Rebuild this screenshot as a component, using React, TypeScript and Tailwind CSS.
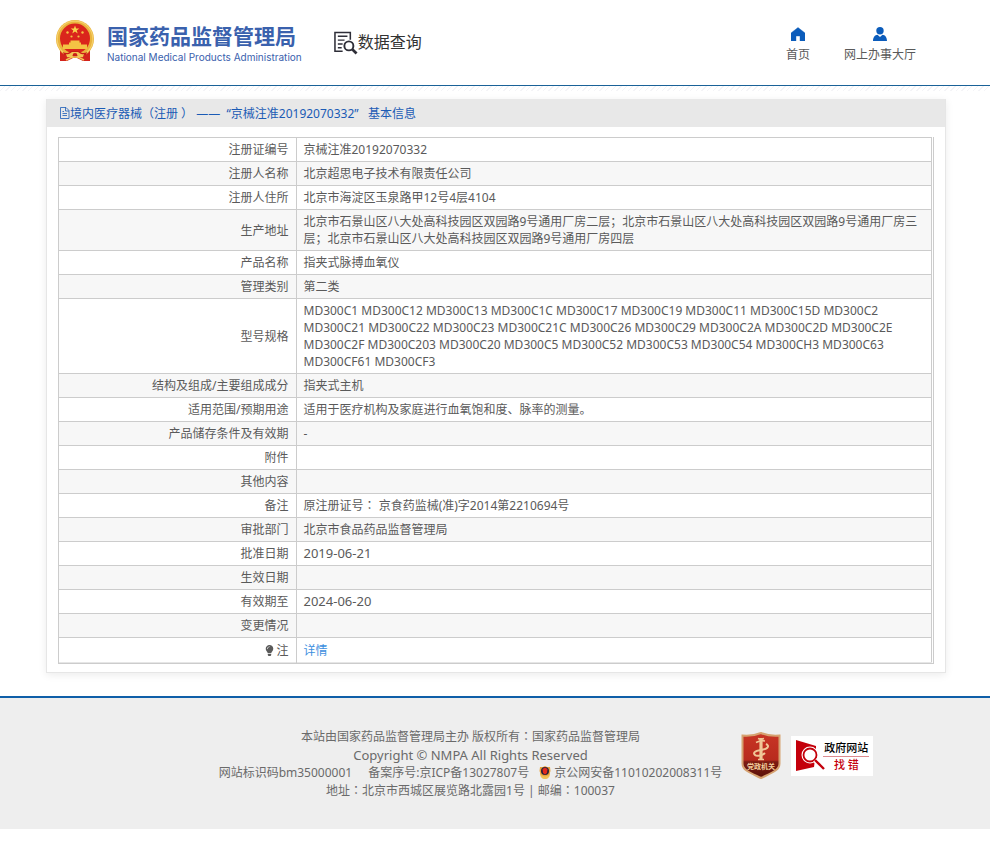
import { FaLightbulb } from "react-icons/fa";

type Row = { label: string; value: string; size?: string };

const rows: Row[] = [
  { label: "注册证编号", value: "京械注准20192070332" },
  { label: "注册人名称", value: "北京超思电子技术有限责任公司" },
  { label: "注册人住所", value: "北京市海淀区玉泉路甲12号4层4104" },
  {
    label: "生产地址",
    value:
      "北京市石景山区八大处高科技园区双园路9号通用厂房二层；北京市石景山区八大处高科技园区双园路9号通用厂房三层；北京市石景山区八大处高科技园区双园路9号通用厂房四层",
  },
  { label: "产品名称", value: "指夹式脉搏血氧仪" },
  { label: "管理类别", value: "第二类" },
  {
    label: "型号规格",
    value:
      "MD300C1 MD300C12 MD300C13 MD300C1C MD300C17 MD300C19 MD300C11 MD300C15D MD300C2\nMD300C21 MD300C22 MD300C23 MD300C21C MD300C26 MD300C29 MD300C2A MD300C2D MD300C2E\nMD300C2F MD300C203 MD300C20 MD300C5 MD300C52 MD300C53 MD300C54 MD300CH3 MD300C63\nMD300CF61 MD300CF3",
  },
  { label: "结构及组成/主要组成成分", value: "指夹式主机" },
  { label: "适用范围/预期用途", value: "适用于医疗机构及家庭进行血氧饱和度、脉率的测量。" },
  { label: "产品储存条件及有效期", value: "-" },
  { label: "附件", value: "" },
  { label: "其他内容", value: "" },
  { label: "备注", value: "原注册证号： 京食药监械(准)字2014第2210694号" },
  { label: "审批部门", value: "北京市食品药品监督管理局" },
  { label: "批准日期", value: "2019-06-21", size: "text-[13px]" },
  { label: "生效日期", value: "" },
  { label: "有效期至", value: "2024-06-20", size: "text-[13px]" },
  { label: "变更情况", value: "" },
];

/** Sets full-width colons in the middle of their cell. */
function CenteredColons({ text }: { text: string }) {
  return (
    <>
      {text.split(/(：)/).map((part, i) =>
        part === "：" ? (
          <span key={i} className="font-['Noto_Sans_CJK_TC',sans-serif] leading-none">
            {part}
          </span>
        ) : (
          part
        ),
      )}
    </>
  );
}

function Emblem() {
  return (
    <svg viewBox="0 0 40 42" className="h-[42px] w-10 shrink-0" aria-hidden="true">
      <path d="M5 28 L5 41 L12 41 L20 37 L28 41 L35 41 L35 28 Z" fill="#d3231c" />
      <circle cx="20" cy="19" r="19" fill="#e9b33c" />
      <circle cx="20" cy="19" r="17.800" fill="none" stroke="#f5cf68" strokeWidth="1.200" />
      <circle cx="20" cy="18.500" r="15" fill="#da251c" />
      <path d="M20 5.500l1.100 3h3.200l-2.600 1.900 1 3.100-2.700-1.900-2.700 1.900 1-3.100-2.600-1.900h3.200z" fill="#f9d34c" />
      <g fill="#f4c244">
        <circle cx="12.500" cy="12.500" r="1.200" />
        <circle cx="27.500" cy="12.500" r="1.200" />
        <circle cx="16.500" cy="16.500" r="1.100" />
        <circle cx="23.500" cy="16.500" r="1.100" />
        <path d="M14 24.500v-2h1.500v-2h9v2h1.500v2h6v4.500h-24v-4.500z" />
      </g>
      <path d="M8 32c3 2 6 1 8-1h8c2 2 5 3 8 1l-1 3c-3 2-5 0-7 0l-4-1-4 1c-2 0-4 2-7 0z" fill="#c91d18" />
      <path d="M11 34c3 1 4-1 6-2h6c2 1 3 3 6 2l-1 3c-2 1-4-1-5-1h-6c-1 0-3 2-5 1z" fill="#f2c654" />
      <circle cx="20" cy="35.500" r="2.400" fill="#c9211a" />
      <path d="M11 40l6-3h6l6 3" fill="none" stroke="#f2c654" strokeWidth="1.500" />
    </svg>
  );
}

function QueryIcon() {
  return (
    <svg viewBox="0 0 25 25" className="size-6 shrink-0" fill="none" stroke="#2e2e38" aria-hidden="true">
      <path d="M9 21H1V1.500h16V9" strokeWidth="1.600" />
      <path d="M4 5.500h10M4 9.500h7M4 13.500h5M4 17.500h4" strokeWidth="1.500" />
      <circle cx="15.500" cy="15.500" r="4.700" strokeWidth="2" />
      <path d="M19 19l4.500 4.500" strokeWidth="2.800" />
    </svg>
  );
}

function HomeIcon() {
  return (
    <svg viewBox="0 0 14 14" className="size-[14px]" aria-hidden="true">
      <path d="M7 0.500L0 6V14h5V9h4v5h5V6z" fill="#0b5cbb" stroke="#0b5cbb" strokeWidth=".4" strokeLinejoin="round" />
    </svg>
  );
}

function PersonIcon() {
  return (
    <svg viewBox="0 0 14 14" className="size-[14px]" fill="#0b5cbb" aria-hidden="true">
      <circle cx="7" cy="3.700" r="3.700" />
      <path d="M0 14c0-4 2-6 4.500-6.300L7 10 9.500 7.700C12 8 14 10 14 14z" />
    </svg>
  );
}

function DocumentIcon() {
  return (
    <svg viewBox="0 0 11 12" className="h-3 w-[11px] shrink-0" fill="none" stroke="#1b5bb5" aria-hidden="true">
      <path d="M1.500.5h5.500l3 3v8h-8.500zM6.500.5v3.500h3.500M3.500 6.500h4.500M3.500 8.500h4.500M3.500 4.500h1.500" strokeWidth=".8" />
    </svg>
  );
}

function PoliceBadge() {
  return (
    <svg viewBox="0 0 12 13" className="mr-[3px] inline-block h-[13px] w-3 align-[-2px]" aria-hidden="true">
      <path d="M1 7c0 4 2 6 5 6s5-2 5-6z" fill="#f0c158" />
      <path d="M6 0l2 1h3l.5 4-1.500 4-4 1.500L2 9 .5 5 1 1h3z" fill="#e8a23b" />
      <circle cx="6" cy="5" r="4" fill="#27233b" />
      <path d="M3.500 3L6 1.500 8.500 3 8 7 6 8.500 4 7z" fill="#e3291d" />
    </svg>
  );
}

function PartyBadge() {
  return (
    <svg viewBox="0 0 40 47" className="h-[47px] w-10" role="img" aria-label="党政机关">
      <defs>
        <linearGradient id="shield" x1="0" y1="0" x2="0" y2="1">
          <stop offset="0" stopColor="#c83525" />
          <stop offset=".6" stopColor="#b82b1d" />
          <stop offset=".64" stopColor="#7d1c12" />
          <stop offset="1" stopColor="#5a1009" />
        </linearGradient>
      </defs>
      <path d="M20 1c6 2.500 12 3 18.500 2.500v28c0 7-8 9.500-18.500 14.500C9.500 41 1.500 38.500 1.500 31.500v-28C8 4 14 3.500 20 1z" fill="url(#shield)" stroke="#d6a270" strokeWidth="2" />
      <g fill="none" stroke="#f0c797">
        <path d="M20 6v21" strokeWidth="3.200" />
        <path d="M15 10.500l5-2 4 .5M17 6.500l3 1 3-1" strokeWidth="1.600" />
        <path d="M25 12c4 2 2 5-5 6s-8 3-6 5 8 0 10-2" strokeWidth="2" />
        <path d="M17 27.500h6" strokeWidth="1.500" />
      </g>
      <text x="20" y="36.500" textAnchor="middle" fontSize="7" fontWeight="700" fill="#f4cf9d">
        党政机关
      </text>
    </svg>
  );
}

function ErrorReportBadge() {
  return (
    <span className="flex h-10 w-[82px] items-center bg-white pl-[5px]">
      <svg viewBox="0 0 30 34" className="h-[34px] w-[30px] shrink-0" fill="none" aria-hidden="true">
        <path d="M0 1l20 6v5l-2 16-18 4z" fill="#c4000b" />
        <circle cx="14" cy="16" r="8.500" fill="#fff" />
        <circle cx="14" cy="16" r="6.500" stroke="#c4000b" strokeWidth="1.800" fill="#fff" />
        <path d="M19 21l3 3" stroke="#fff" strokeWidth="5" />
        <path d="M19 21l9 9" stroke="#c4000b" strokeWidth="2.400" />
      </svg>
      <span className="-ml-[3px] flex flex-col items-center">
        <span className="border-b border-[#dc8b8f] px-px text-[11px] leading-[17px] font-medium text-black">政府网站</span>
        <span className="text-[11px] leading-[15px] font-medium text-[#c4000b]">找 错</span>
      </span>
    </span>
  );
}

export default function App() {
  return (
    <div className="bg-white font-['Noto_Sans','Noto_Sans_CJK_SC',sans-serif] text-xs text-[#5a5a5a]">
      <header className="border-b border-[#1a6298] pl-0.5">
        <div className="mx-auto flex h-[85px] max-w-[900px] items-start justify-between pr-[30px] pl-[9px]">
          <div className="flex">
            <a href="#" className="mt-5 flex gap-3 text-[#3a61ad]">
              <Emblem />
              <span className="flex flex-col">
                <span className="mt-[3px] text-[21px] leading-[26px] font-bold">国家药品监督管理局</span>
                <span className="font-['Inter',sans-serif] text-[10px] leading-4">
                  National Medical Products Administration
                </span>
              </span>
            </a>
            <a href="#" className="mt-[31px] ml-8 flex text-[#333]">
              <QueryIcon />
              <span className="text-base leading-[22px]">数据查询</span>
            </a>
          </div>
          <nav className="mt-[27px] flex gap-[34px]">
            <a href="#" className="flex flex-col items-center gap-[5px]">
              <HomeIcon />
              <span className="leading-[18px]">首页</span>
            </a>
            <a href="#" className="flex flex-col items-center gap-[5px]">
              <PersonIcon />
              <span className="leading-[18px]">网上办事大厅</span>
            </a>
          </nav>
        </div>
      </header>
      <div className="h-[5px] bg-[repeating-linear-gradient(135deg,#fff_0_3px,#f4f4f7_3px_4px)]" />

      <div className="mt-2 pl-0.5">
        <main className="mx-auto max-w-[900px] border border-t-0 border-[#e6e6e6] bg-white pb-2 shadow-[0_2px_8px_rgba(0,0,0,0.08)]">
          <h1 className="flex h-7 items-center bg-[#e8e8e8] pl-3 text-xs text-[#1b5bb5]">
            <DocumentIcon />
            <span className="pt-0.5 whitespace-pre">境内医疗器械（注册 ） ——  “京械注准20192070332”   基本信息</span>
          </h1>
          <div className="mx-[11px] mt-[10px] border border-t-0 border-[#ccc] pr-px">
            <table className="w-full border-collapse border-t border-r border-[#ccc]">
              <tbody>
                {rows.map((row) => (
                  <tr key={row.label} className="border-b border-[#ccc] even:bg-[#f7f7f7]">
                    <th scope="row" className="w-[237px] border-r border-[#ccc] py-[3px] pr-[7px] text-right leading-[17px] font-normal">
                      {row.label}
                    </th>
                    <td className={`h-6 px-[7px] py-[3px] leading-[17px] whitespace-pre-line ${row.size ?? ""}`}>
                      <CenteredColons text={row.value} />
                    </td>
                  </tr>
                ))}
                <tr className="border-b border-[#e6e6e6]">
                  <th scope="row" className="border-r border-[#ccc] py-[3px] pr-[7px] text-right leading-[17px] font-normal">
                    <FaLightbulb className="mr-px inline size-[11px] align-[-1px]" />注
                  </th>
                  <td className="h-[25px] py-[3px] pl-[7px] leading-[17px]">
                    <a href="#" className="text-[#3d8fe0]">详情</a>
                  </td>
                </tr>
              </tbody>
            </table>
          </div>
        </main>
      </div>

      <footer className="mt-[23px] border-t-2 border-[#0f5fa8] bg-[#eee] text-[#6a6a6a]">
        <div className="flex h-[131px] items-start justify-center pt-[30px] pl-[102px]">
          <div className="text-center leading-[18px]">
            <p><CenteredColons text="本站由国家药品监督管理局主办 版权所有：国家药品监督管理局" /></p>
            <p className="text-[13px] leading-[18px]">Copyright © NMPA All Rights Reserved</p>
            <p>
              <span className="mr-4">网站标识码bm35000001</span>
              <a href="#" className="mr-[10px]">备案序号:京ICP备13027807号</a>
              <a href="#"><PoliceBadge />京公网安备11010202008311号</a>
            </p>
            <p><CenteredColons text="地址：北京市西城区展览路北露园1号 | 邮编：100037" /></p>
          </div>
          <div className="mt-1 ml-[19px] flex items-center gap-[10px]">
            <a href="#"><PartyBadge /></a>
            <a href="#" aria-label="政府网站找错"><ErrorReportBadge /></a>
          </div>
        </div>
      </footer>
    </div>
  );
}
